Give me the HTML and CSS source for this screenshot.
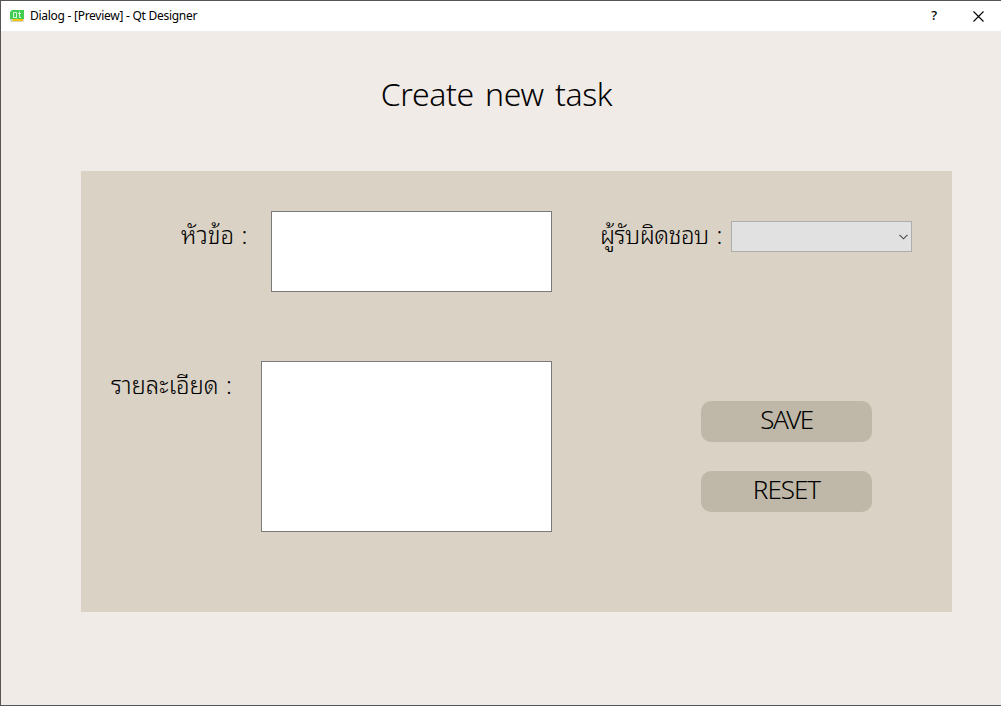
FILE: index.html
```html
<!DOCTYPE html>
<html lang="th">
<head>
<meta charset="utf-8">
<title>Dialog - [Preview] - Qt Designer</title>
<link rel="stylesheet" href="styles.css">
</head>
<body>
<div class="window">
  <header class="titlebar">
    <svg class="logo" width="14" height="12" viewBox="0 0 14 12">
      <path d="M2 0H14V9H0V2Z" fill="#41cd52"/>
      <path d="M0 9H14V11L13 12H1L0 11Z" fill="#d5d5c8"/>
      <path d="M3 9H13V11H2Z" fill="#f5c211"/>
      <path d="M3.5 2.5H6.5V7.5H3.5ZM5.500 7L7 8.500M9.500 1.500V7.500H11M8 3.500H11" fill="none" stroke="#d9f7dc"/>
    </svg>
    <span class="caption">Dialog - [Preview] - Qt Designer</span>
    <span class="help">?</span>
    <svg class="close" width="11" height="11" viewBox="0 0 11 11"><path d="M.5.5L10.500 10.500M10.500.5L.5 10.500" stroke="#000" stroke-width="1.100"/></svg>
  </header>
  <main class="dialog">
    <h1 class="title">Create new task</h1>
    <section class="panel">
      <div class="column">
        <div class="row row-topic">
          <label class="label topic">หัวข้อ :</label>
          <div class="input input-topic"></div>
        </div>
        <div class="row">
          <label class="label detail">รายละเอียด :</label>
          <div class="input input-detail"></div>
        </div>
      </div>
      <div class="column side">
        <div class="row assignee">
          <label class="label owner">ผู้รับผิดชอบ :</label>
          <div class="combo"><svg width="9" height="6" viewBox="0 0 9 6"><path d="M.5.8L4.500 4.800L8.500.8" fill="none" stroke="#484848" stroke-width="1.100"/></svg></div>
        </div>
        <div class="actions">
          <div class="button"><span class="save">SAVE</span></div>
          <div class="button"><span class="reset">RESET</span></div>
        </div>
      </div>
    </section>
  </main>
</div>
</body>
</html>
```
FILE: styles.css
```css
* { box-sizing: border-box; }
body { margin: 0; background: #f0ebe7; color: #000; }
.window {
  width: 1001px; height: 706px;
  border: 1px solid #555; border-right: 0;
  display: flex; flex-direction: column;
}
.titlebar {
  height: 30px; background: #fff;
  display: flex; align-items: center;
  padding: 0 17px 0 9px;
  font: 12px/16px "Noto Sans", sans-serif;
}
.caption { margin-left: 6px; letter-spacing: -0.27px; white-space: nowrap; }
.help { margin-left: auto; font-size: 13px; font-weight: 500; line-height: 18px; padding-bottom: 2px; }
.close { margin-left: 36px; }
.dialog { flex: 1; padding-left: 80px; }
.title {
  margin: 0; height: 140px; width: 831px;
  padding-top: 38px;
  font: 300 32px/50px "Noto Sans", "Open Sans", sans-serif;
  letter-spacing: -0.4px; word-spacing: 3.5px;
  text-align: center; white-space: nowrap;
}
.panel {
  width: 871px; height: 441px; background: #dad2c5;
  display: flex; padding-top: 40px;
}
.column { width: 471px; }
.row { display: flex; }
.row-topic { height: 150px; }
.label {
  font: 300 24px/44px "Noto Sans Thai Looped", "Noto Looped Thai", "Noto Serif Thai", "Loma", "Garuda", "Noto Sans Thai", "Noto Sans", sans-serif;
  white-space: nowrap; height: 50px;
}
.topic { width: 190px; padding-left: 100px; word-spacing: 1px; }
.detail { width: 180px; padding-left: 30px; letter-spacing: -0.1px; word-spacing: 1.500px; }
.owner { width: 131px; letter-spacing: -0.5px; word-spacing: 2px; }
.input { background: #fff; border: 1px solid #7a7a7a; }
.input-topic { width: 281px; height: 81px; }
.input-detail { width: 291px; height: 171px; }
.side { padding-left: 48px; }
.assignee { height: 190px; }
.combo {
  width: 181px; height: 31px; margin-top: 10px;
  background: #e1e1e1; border: 1px solid #adadad;
  display: flex; align-items: center; justify-content: flex-end; padding-right: 3px;
  flex: none;
}
.actions { display: flex; flex-direction: column; gap: 29px; padding-left: 101px; }
.button {
  width: 171px; height: 41px; border-radius: 10px; background: #bfb8a8;
  font: 300 26px/37px "Noto Sans", "Open Sans", sans-serif;
  text-align: center;
}
.save { letter-spacing: -1.500px; }
.reset { letter-spacing: -1px; }
```
